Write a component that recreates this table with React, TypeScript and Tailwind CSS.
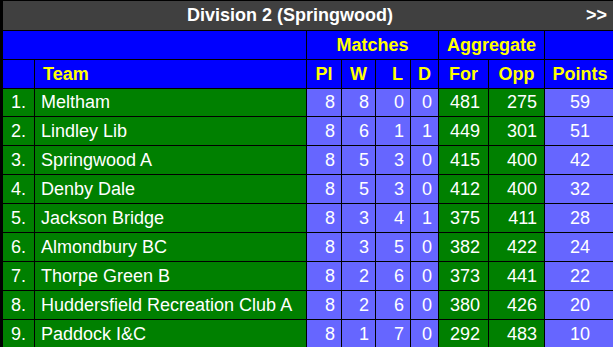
import React from "react";

const rows = [
  { pos: 1, team: "Meltham", pl: 8, w: 8, l: 0, d: 0, f: 481, a: 275, pts: 59 },
  { pos: 2, team: "Lindley Lib", pl: 8, w: 6, l: 1, d: 1, f: 449, a: 301, pts: 51 },
  { pos: 3, team: "Springwood A", pl: 8, w: 5, l: 3, d: 0, f: 415, a: 400, pts: 42 },
  { pos: 4, team: "Denby Dale", pl: 8, w: 5, l: 3, d: 0, f: 412, a: 400, pts: 32 },
  { pos: 5, team: "Jackson Bridge", pl: 8, w: 3, l: 4, d: 1, f: 375, a: 411, pts: 28 },
  { pos: 6, team: "Almondbury BC", pl: 8, w: 3, l: 5, d: 0, f: 382, a: 422, pts: 24 },
  { pos: 7, team: "Thorpe Green B", pl: 8, w: 2, l: 6, d: 0, f: 373, a: 441, pts: 22 },
  { pos: 8, team: "Huddersfield Recreation Club A", pl: 8, w: 2, l: 6, d: 0, f: 380, a: 426, pts: 20 },
  { pos: 9, team: "Paddock I&C", pl: 8, w: 1, l: 7, d: 0, f: 292, a: 483, pts: 10 },
];

const head = "bg-[#0000ff] text-[#ffff00] font-bold flex items-center justify-center";
const lav = "bg-[#6666ff] flex items-center justify-end pr-[6px]";
const grn = "bg-[#008000] flex items-center justify-end pr-[7px]";

export default function App() {
  return (
    <div className="w-[613px] h-[347px] overflow-hidden bg-white">
      <div
        className="grid w-max gap-px bg-black pl-[3px] pt-px pr-[3px] text-[18px] text-white font-['Liberation_Sans',Arial,sans-serif]
          grid-cols-[31px_271px_34px_33px_34px_27px_49px_55px_70px]
          grid-rows-[29px_28px_28px_27px_repeat(8,28px)]"
      >
        {/* title */}
        <div className="col-span-9 bg-[#404040] flex items-center font-bold">
          <span className="flex-1 text-center">Division 2 (Springwood)</span>
          <span className="pl-[9px] pr-[8px]">&gt;&gt;</span>
        </div>

        {/* header row 1 */}
        <div className="col-span-2 bg-[#0000ff]" />
        <div className={`col-span-4 ${head}`}>Matches</div>
        <div className={`col-span-2 ${head}`}>Aggregate</div>
        <div className="bg-[#0000ff]" />

        {/* header row 2 */}
        <div className="bg-[#0000ff]" />
        <div className={`${head} !justify-start pl-2`}>Team</div>
        <div className={head}>Pl</div>
        <div className={head}>W</div>
        <div className={`${head} !justify-end pr-[7px]`}>L</div>
        <div className={head}>D</div>
        <div className={head}>For</div>
        <div className={head}>Opp</div>
        <div className={head}>Points</div>

        {rows.map((r) => (
          <React.Fragment key={r.pos}>
            <div className="bg-[#008000] flex items-center justify-center">{r.pos}.</div>
            <div className="bg-[#008000] flex items-center pl-1.5 whitespace-nowrap">{r.team}</div>
            <div className={lav}>{r.pl}</div>
            <div className={lav}>{r.w}</div>
            <div className={lav}>{r.l}</div>
            <div className={lav}>{r.d}</div>
            <div className={`${grn} !pr-[8px]`}>{r.f}</div>
            <div className={grn}>{r.a}</div>
            <div className="bg-[#6666ff] flex items-center justify-center">{r.pts}</div>
          </React.Fragment>
        ))}
      </div>
    </div>
  );
}
